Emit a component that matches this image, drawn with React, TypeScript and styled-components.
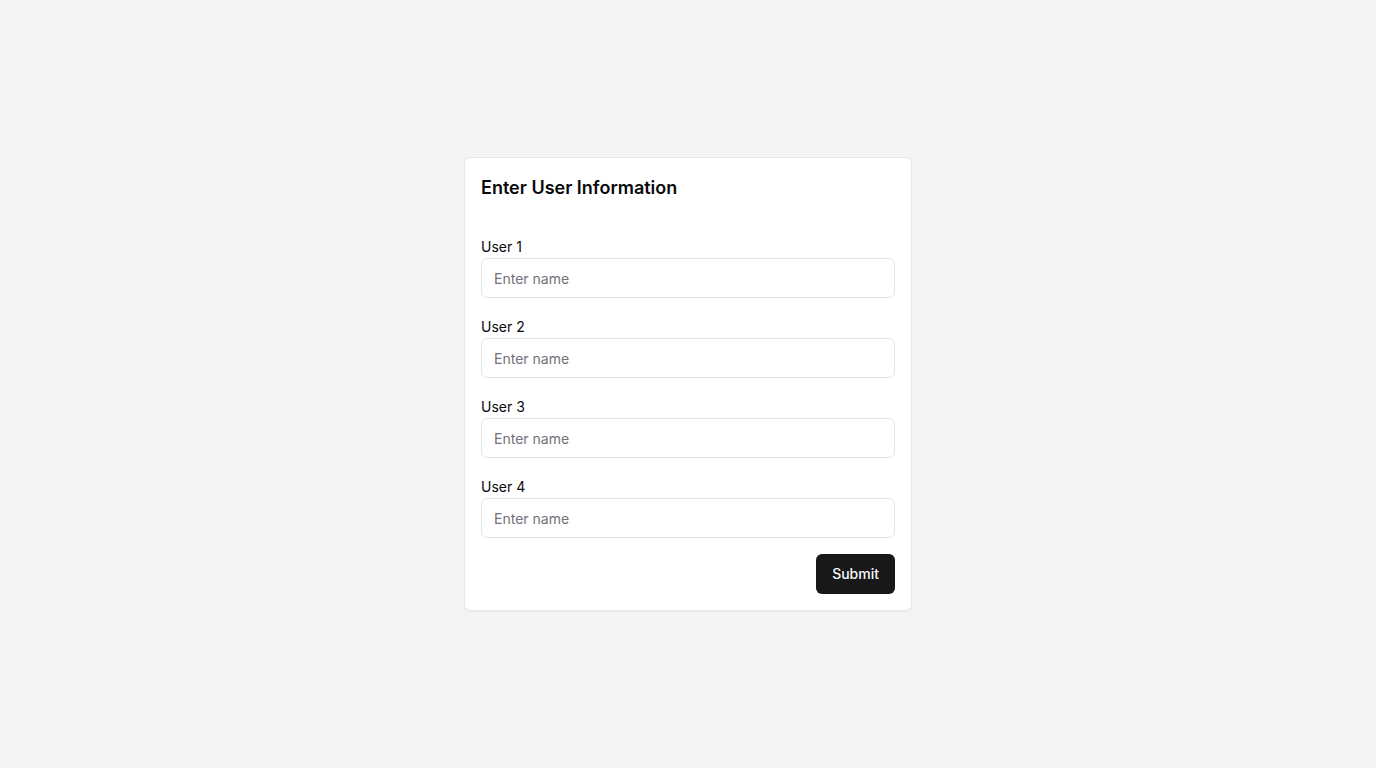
import React from "react";
import styled, { createGlobalStyle } from "styled-components";

const GlobalStyle = createGlobalStyle`
  html, body {
    margin: 0;
    padding: 0;
    background: #f3f4f6;
    font-family: Inter, "Noto Sans", "Liberation Sans", sans-serif;
    color: #09090b;
  }
  * { box-sizing: border-box; }
`;

const Page = styled.div`
  min-height: 100vh;
  display: flex;
  align-items: center;
  justify-content: center;
`;

const Card = styled.div`
  width: 448px;
  background: #ffffff;
  border: 1px solid #e5e7eb;
  border-radius: 6px;
  box-shadow: 0 1px 2px rgba(0, 0, 0, 0.05);
  padding: 16px;
`;

const Title = styled.h2`
  margin: 0 0 38px;
  font-size: 18px;
  line-height: 28px;
  font-weight: 600;
  color: #09090b;
`;

const Form = styled.form`
  display: flex;
  flex-direction: column;
  gap: 22px;
`;

const Field = styled.div`
  display: flex;
  flex-direction: column;
  gap: 4px;
`;

const Label = styled.label`
  font-size: 14px;
  line-height: 14px;
  font-weight: 400;
  color: #09090b;
`;

const Input = styled.input`
  height: 40px;
  width: 100%;
  border: 1px solid #e4e4e7;
  border-radius: 6px;
  padding: 0 12px;
  font-family: inherit;
  font-size: 14px;
  color: #09090b;
  background: #fff;
  outline: none;
  &::placeholder {
    color: #71717a;
  }
`;

const Actions = styled.div`
  display: flex;
  justify-content: flex-end;
  margin-top: -6px;
`;

const Button = styled.button`
  height: 40px;
  padding: 0 16px 1px;
  border: none;
  border-radius: 6px;
  background: #18181b;
  color: #fafafa;
  font-family: inherit;
  font-size: 14px;
  font-weight: 500;
  cursor: pointer;
`;

export default function App() {
  const users = [1, 2, 3, 4];
  return (
    <>
      <GlobalStyle />
      <Page>
        <Card>
          <Title>Enter User Information</Title>
          <Form onSubmit={(e) => e.preventDefault()}>
            {users.map((n) => (
              <Field key={n}>
                <Label htmlFor={`user-${n}`}>User {n}</Label>
                <Input id={`user-${n}`} placeholder="Enter name" />
              </Field>
            ))}
            <Actions>
              <Button type="submit">Submit</Button>
            </Actions>
          </Form>
        </Card>
      </Page>
    </>
  );
}
